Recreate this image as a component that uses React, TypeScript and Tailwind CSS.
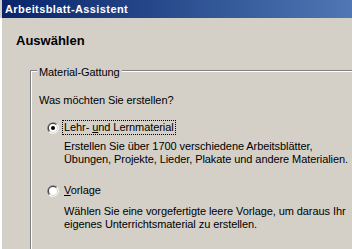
const Radio = ({ checked }: { checked?: boolean }) => (
  <svg width="12" height="12" viewBox="0 0 12 12" className="shrink-0">
    <path d="M1.76 10.24 A6 6 0 0 1 10.24 1.76 Z" fill="#808080" />
    <path d="M10.24 1.76 A6 6 0 0 1 1.76 10.24 Z" fill="#ffffff" />
    <path d="M2.46 9.54 A5 5 0 0 1 9.54 2.46 Z" fill="#404040" />
    <path d="M9.54 2.46 A5 5 0 0 1 2.46 9.54 Z" fill="#d4d0c8" />
    <circle cx="6" cy="6" r="4" fill="#ffffff" />
    {checked && <circle cx="6" cy="6" r="2" fill="#000000" />}
  </svg>
);

const Option = ({
  checked,
  focused,
  label,
  description,
  className,
  descClassName,
}: {
  checked?: boolean;
  focused?: boolean;
  label: React.ReactNode;
  description: React.ReactNode;
  className: string;
  descClassName: string;
}) => (
  <>
    <div className={`flex items-center pl-[8px] ${className}`}>
      <Radio checked={checked} />
      <span
        className={`ml-[3px] border px-[1px] ${
          focused ? "border-dotted border-black" : "border-transparent"
        }`}
      >
        {label}
      </span>
    </div>
    <p className={`ml-[25px] whitespace-nowrap ${descClassName}`}>
      {description}
    </p>
  </>
);

const App = () => {
  return (
    <div className="flex h-[249px] w-[352px] flex-col overflow-hidden bg-[#d4d0c8] font-['Liberation_Sans',Arial,sans-serif] text-[11px] leading-[13px] tracking-[-0.08px] text-black">
      <div className="h-px bg-white" />
      <div className="h-[2px]" />
      <div className="ml-[2px] h-[18px] bg-linear-to-r from-[#0a246a] to-[#5078b4] pl-[3px] text-[11px] leading-[18px] font-bold tracking-[0.4px] text-white">
        Arbeitsblatt-Assistent
      </div>
      <div className="flex-1 border-l-2 border-white">
        <h1 className="pt-[15px] pl-[14px] text-[13px] leading-[16px] font-bold tracking-normal">
          Auswählen
        </h1>
        <div className="relative mt-[21px] ml-[28px] w-[360px] border-t border-l border-[#808080]">
          <span className="absolute top-[-5px] left-[6px] bg-[#d4d0c8] px-[2px]">
            Material-Gattung
          </span>
          <div className="border-t border-l border-white pt-[22px] pb-[40px] pl-[7px]">
            <p>Was möchten Sie erstellen?</p>
            <Option
              checked
              focused
              className="mt-[13px]"
              descClassName="mt-[5px]"
              label={
                <>
                  Lehr- <span className="underline">u</span>nd Lernmaterial
                </>
              }
              description={
                <>
                  Erstellen Sie über 1700 verschiedene Arbeitsblätter,
                  <br />
                  Übungen, Projekte, Lieder, Plakate und andere Materialien.
                </>
              }
            />
            <Option
              className="mt-[17px]"
              descClassName="mt-[7px]"
              label={
                <>
                  <span className="underline">V</span>orlage
                </>
              }
              description={
                <>
                  Wählen Sie eine vorgefertigte leere Vorlage, um daraus Ihr
                  <br />
                  eigenes Unterrichtsmaterial zu erstellen.
                </>
              }
            />
          </div>
        </div>
      </div>
    </div>
  );
};

export default App;
